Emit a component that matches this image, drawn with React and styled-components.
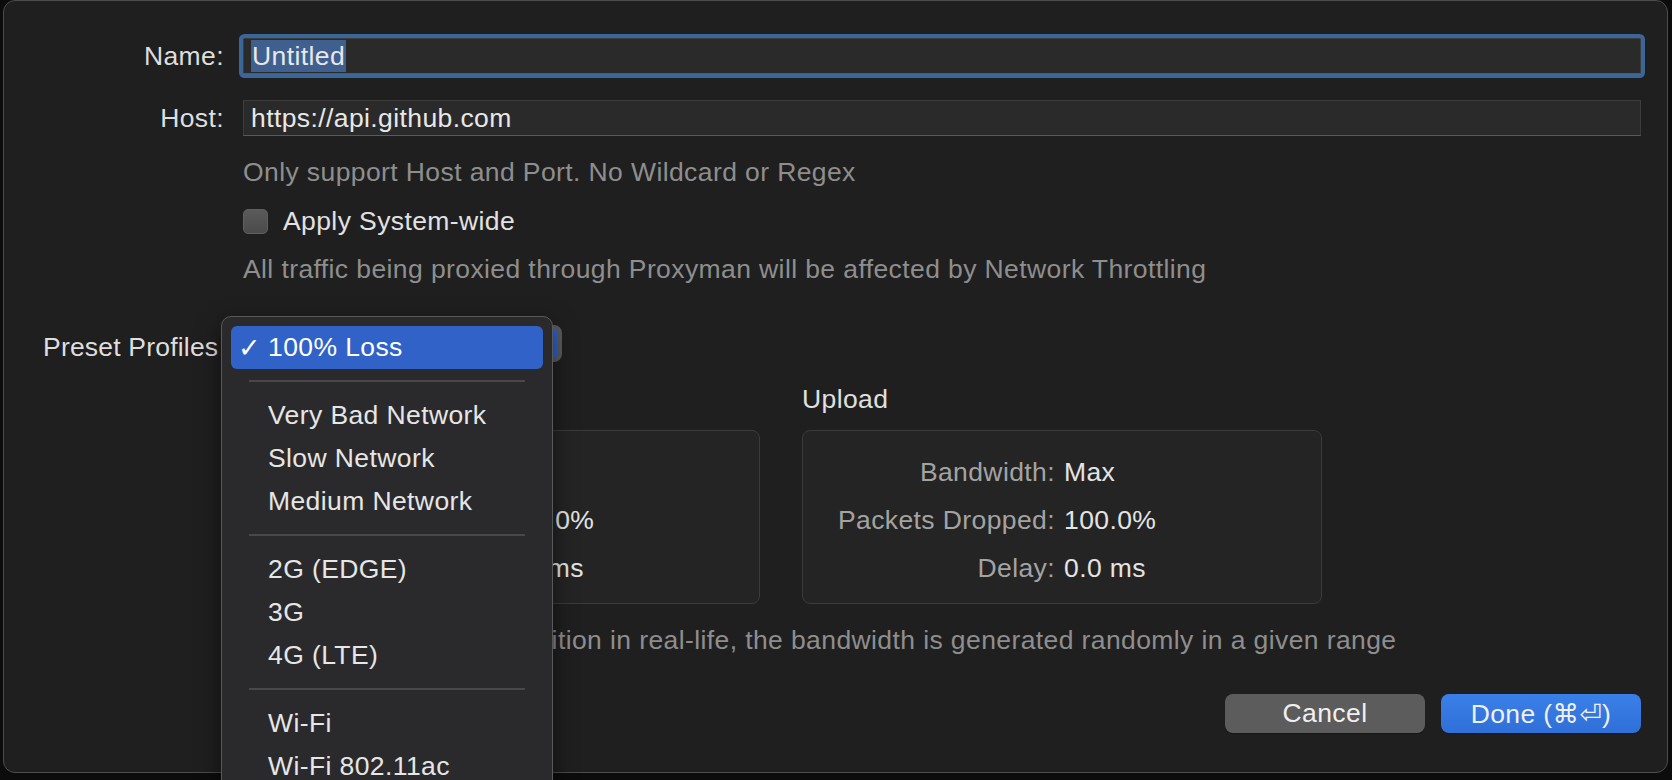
import React from "react";
import styled, { createGlobalStyle } from "styled-components";

const GlobalStyle = createGlobalStyle`
	html {
		overflow: hidden;
		background: #0c0c0c;
	}
	body {
		margin: 0;
		padding: 0;
		min-height: 780px;
		font-family: "Liberation Sans", "DejaVu Sans", sans-serif;
		font-size: 26.5px;
		letter-spacing: 0.4px;
		color: #e2e2e2;
	}
`;

const downloadRows = [
	{ label: "Bandwidth:", value: "Max" },
	{ label: "Packets Dropped:", value: "100.0%" },
	{ label: "Delay:", value: "0.0 ms" },
];

const uploadRows = [
	{ label: "Bandwidth:", value: "Max" },
	{ label: "Packets Dropped:", value: "100.0%" },
	{ label: "Delay:", value: "0.0 ms" },
];

const menuGroups = [
	["Very Bad Network", "Slow Network", "Medium Network"],
	["2G (EDGE)", "3G", "4G (LTE)"],
	["Wi-Fi", "Wi-Fi 802.11ac"],
];

const App = () => {
	return (
		<>
			<GlobalStyle />
			<Page>
				<Window>
					<FieldGrid>
						<FieldLabel>Name:</FieldLabel>
						<TextField focused>
							<Selection>Untitled</Selection>
						</TextField>
						<FieldLabel>Host:</FieldLabel>
						<TextField>https://api.github.com</TextField>
					</FieldGrid>

					<Indented>
						<Hint top={21}>Only support Host and Port. No Wildcard or Regex</Hint>
						<CheckRow>
							<CheckBox />
							<span>Apply System-wide</span>
						</CheckRow>
						<Hint top={18}>
							All traffic being proxied through Proxyman will be affected by
							Network Throttling
						</Hint>
					</Indented>

					<PresetRow>
						<PresetLabel>Preset Profiles</PresetLabel>
						<PopupAnchor>
							<PopupButton />
							<Menu>
								<MenuItem selected>
									<Check>✓</Check>
									100% Loss
								</MenuItem>
								{menuGroups.map((group, i) => (
									<React.Fragment key={i}>
										<Separator />
										{group.map((item) => (
											<MenuItem key={item}>
												<Check />
												{item}
											</MenuItem>
										))}
									</React.Fragment>
								))}
							</Menu>
						</PopupAnchor>
					</PresetRow>

					<Sections>
						<Section>
							<SectionTitle>Download</SectionTitle>
							<StatBox>
								{downloadRows.map((r) => (
									<StatRow key={r.label}>
										<StatLabel>{r.label}</StatLabel>
										<StatValue>{r.value}</StatValue>
									</StatRow>
								))}
							</StatBox>
						</Section>
						<Section>
							<SectionTitle>Upload</SectionTitle>
							<StatBox>
								{uploadRows.map((r) => (
									<StatRow key={r.label}>
										<StatLabel>{r.label}</StatLabel>
										<StatValue>{r.value}</StatValue>
									</StatRow>
								))}
							</StatBox>
						</Section>
					</Sections>

					<Indented>
						<Hint top={21}>
							To simulate network condition in real-life, the bandwidth is
							generated randomly in a given range
						</Hint>
					</Indented>

					<Footer>
						<DialogButton>Cancel</DialogButton>
						<DialogButton primary>Done (⌘⏎)</DialogButton>
					</Footer>
				</Window>
			</Page>
		</>
	);
};

export default App;

const Page = styled.div`
	height: 780px;
	padding-left: 3px;
`;

const Window = styled.div`
	box-sizing: border-box;
	width: 1665px;
	height: 773px;
	padding-top: 37px;
	background: #1f1f1f;
	border: 1px solid #4c4c4c;
	border-radius: 12px;
	display: flex;
	flex-direction: column;
`;

const FieldGrid = styled.div`
	display: grid;
	grid-template-columns: 220px 1fr;
	column-gap: 19px;
	row-gap: 26px;
	align-items: center;
	padding-right: 26px;
`;

const FieldLabel = styled.div`
	text-align: right;
	color: #dedede;
	line-height: 36px;
`;

const TextField = styled.div`
	box-sizing: border-box;
	height: 36px;
	padding: 0 7px;
	display: flex;
	align-items: center;
	background: #2a2a2a;
	border: 1px solid #3c3c3c;
	border-bottom-color: #5a5a5a;
	color: #e8e8e8;
	box-shadow: ${(p) => (p.focused ? "0 0 0 4px #3b6798" : "none")};
	border-radius: ${(p) => (p.focused ? "2px" : "0")};
`;

const Selection = styled.span`
	background: #3f5f8e;
	line-height: 32px;
	padding: 0 1px;
`;

const Indented = styled.div`
	padding-left: 239px;
`;

const Hint = styled.div`
	margin-top: ${(p) => p.top}px;
	line-height: 30px;
	color: #8e8e8e;
	white-space: nowrap;
`;

const CheckRow = styled.div`
	margin-top: 19px;
	display: flex;
	align-items: center;
	gap: 15px;
	line-height: 30px;
	color: #e2e2e2;
`;

const CheckBox = styled.div`
	box-sizing: border-box;
	width: 25px;
	height: 25px;
	border-radius: 5px;
	background: linear-gradient(#5a5a5a, #4b4b4b);
	border: 1px solid #5f5f5f;
`;

const PresetRow = styled.div`
	margin-top: 41px;
	display: grid;
	grid-template-columns: 185px auto;
	align-items: center;
	padding-left: 39px;
`;

const PresetLabel = styled.div`
	color: #dedede;
	line-height: 30px;
	padding-top: 6px;
	white-space: nowrap;
	letter-spacing: 0.2px;
`;

const PopupAnchor = styled.div`
	position: relative;
	width: 334px;
	height: 37px;
`;

const PopupButton = styled.div`
	box-sizing: border-box;
	width: 100%;
	height: 100%;
	background: #2f62c9;
	border: 4px solid #5c5c5c;
	border-radius: 8px;
`;

const Menu = styled.div`
	position: absolute;
	left: -7px;
	top: -9px;
	width: 332px;
	box-sizing: border-box;
	padding: 9px 9px 12px;
	background: #2a2a2c;
	border: 1px solid #595959;
	border-radius: 10px;
	box-shadow: 0 8px 24px rgba(0, 0, 0, 0.5);
	z-index: 10;
`;

const MenuItem = styled.div`
	height: 43px;
	display: flex;
	align-items: center;
	padding-left: 7px;
	border-radius: 6px;
	color: ${(p) => (p.selected ? "#ffffff" : "#e6e6e6")};
	background: ${(p) => (p.selected ? "#3062c8" : "transparent")};
	white-space: nowrap;
`;

const Check = styled.span`
	width: 30px;
	font-family: "DejaVu Sans", sans-serif;
	font-size: 27px;
	font-weight: bold;
	letter-spacing: 0;
`;

const Separator = styled.div`
	height: 2px;
	margin: 11px 18px 12px;
	background: #48484a;
`;

const Sections = styled.div`
	margin-top: 22px;
	padding-left: 236px;
	display: grid;
	grid-template-columns: 520px 520px;
	column-gap: 42px;
`;

const Section = styled.div`
	display: flex;
	flex-direction: column;
	gap: 16px;
	&:first-child > div:first-child {
		padding-left: 3px;
	}
`;

const SectionTitle = styled.div`
	line-height: 30px;
	color: #e0e0e0;
`;

const StatBox = styled.div`
	box-sizing: border-box;
	height: 174px;
	padding: 17px 0 12px;
	background: #242424;
	border: 1px solid #3b3b3b;
	border-radius: 8px;
`;

const StatRow = styled.div`
	display: grid;
	grid-template-columns: 252px auto;
	column-gap: 9px;
	line-height: 48px;
`;

const StatLabel = styled.div`
	text-align: right;
	color: #a3a3a3;
	white-space: nowrap;
`;

const StatValue = styled.div`
	color: #e4e4e4;
	white-space: nowrap;
`;

const Footer = styled.div`
	margin-top: 39px;
	padding-right: 26px;
	display: flex;
	justify-content: flex-end;
	gap: 16px;
`;

const DialogButton = styled.div`
	width: 200px;
	height: 39px;
	border-radius: 8px;
	display: flex;
	align-items: center;
	justify-content: center;
	color: #f0f0f0;
	background: ${(p) =>
		p.primary ? "linear-gradient(#3a80e8, #2f6fd8)" : "#5c5c5c"};
	box-shadow: 0 1px 1px rgba(0, 0, 0, 0.3);
	white-space: nowrap;
`;
